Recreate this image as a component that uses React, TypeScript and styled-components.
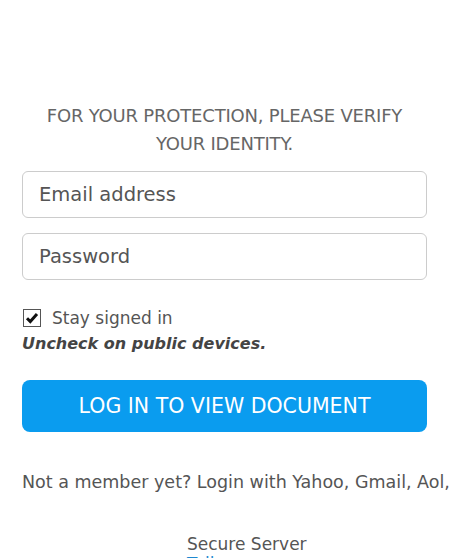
import styled, { createGlobalStyle } from 'styled-components';

const GlobalStyle = createGlobalStyle`
  html, body {
    margin: 0;
    padding: 0;
    background: #fff;
    overflow: hidden;
  }
  body {
    font-family: "DejaVu Sans", Verdana, sans-serif;
    color: #555;
  }
`;

const Page = styled.div`
  width: 449px;
  height: 558px;
  overflow: hidden;
  padding: 102px 22px 0;
  box-sizing: border-box;
`;

const Notice = styled.p`
  margin: 0 0 13px;
  text-align: center;
  font-size: 18px;
  line-height: 28px;
  color: #666;
  letter-spacing: -0.2px;
  text-transform: uppercase;
`;

const Field = styled.input`
  display: block;
  width: 100%;
  height: 47px;
  box-sizing: border-box;
  margin-bottom: 15px;
  padding: 0 16px;
  border: 1px solid #ccc;
  border-radius: 6px;
  font-family: inherit;
  font-size: 19.5px;
  color: #555;
  outline: none;

  &::placeholder {
    color: #555;
    opacity: 1;
  }
`;

const CheckRow = styled.label`
  display: flex;
  align-items: center;
  gap: 11px;
  margin-top: 28px;
  font-size: 17px;
  line-height: 20px;
  color: #555;
`;

const HiddenCheck = styled.input`
  display: none;
`;

const Box = styled.span`
  display: inline-flex;
  align-items: center;
  justify-content: center;
  width: 18px;
  height: 18px;
  margin-left: 1px;
  box-sizing: border-box;
  border: 1px solid #555;
  background: #fff;
`;

const Hint = styled.div`
  font-size: 16px;
  line-height: 20px;
  font-weight: bold;
  font-style: italic;
  color: #444;
  margin-top: 6px;
`;

const Submit = styled.button`
  display: block;
  width: 100%;
  height: 52px;
  margin-top: 26px;
  border: 0;
  border-radius: 8px;
  background: #0a9cef;
  color: #fff;
  font-family: inherit;
  font-size: 20.5px;
  text-transform: uppercase;
`;

const Member = styled.div`
  margin-top: 39px;
  font-size: 17.5px;
  line-height: 22px;
  color: #555;
  white-space: nowrap;
`;

const Footer = styled.div`
  margin-top: 41px;
  padding-left: 165px;
`;

const FooterBlock = styled.div`
  font-size: 17px;
  line-height: 20px;
  color: #555;
`;

const FooterLink = styled.a`
  display: block;
  color: #1e88d0;
  text-decoration: none;
`;

export default function App() {
  return (
    <>
      <GlobalStyle />
      <Page>
        <Notice>For your protection, please verify your identity.</Notice>
        <Field type="email" placeholder="Email address" />
        <Field type="password" placeholder="Password" />
        <CheckRow>
          <HiddenCheck type="checkbox" defaultChecked />
          <Box>
            <svg width="14" height="14" viewBox="0 0 14 14">
              <path d="M2 7.2 L5.3 10.5 L12 3" fill="none" stroke="#111" strokeWidth="3" />
            </svg>
          </Box>
          Stay signed in
        </CheckRow>
        <Hint>Uncheck on public devices.</Hint>
        <Submit>Log in to view document</Submit>
        <Member>Not a member yet? Login with Yahoo, Gmail, Aol,</Member>
        <Footer>
          <FooterBlock>
            Secure Server
            <FooterLink href="#">Tell us</FooterLink>
          </FooterBlock>
        </Footer>
      </Page>
    </>
  );
}
